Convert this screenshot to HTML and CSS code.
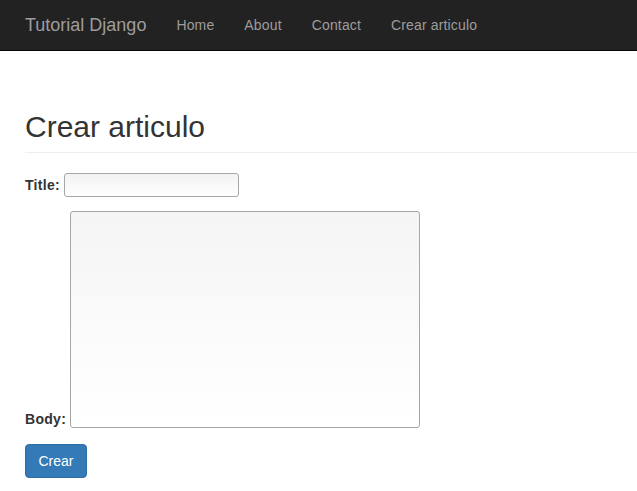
FILE: index.html
```html
<!DOCTYPE html>
<html>
<head>
<meta charset="utf-8">
<title>Crear articulo</title>
<link rel="stylesheet" href="styles.css">
</head>
<body>
<nav class="navbar">
  <a class="brand" href="#">Tutorial Django</a>
  <ul class="nav">
    <li><a href="#">Home</a></li>
    <li><a href="#">About</a></li>
    <li><a href="#">Contact</a></li>
    <li><a href="#">Crear articulo</a></li>
  </ul>
</nav>
<main class="container">
  <div class="page-header">
    <h1>Crear articulo</h1>
  </div>
  <form class="form">
    <p class="row row-title"><label for="title">Title:</label><input id="title" type="text" class="input"></p>
    <p class="row row-body"><label for="body">Body:</label><textarea id="body" class="textarea"></textarea></p>
    <button type="button" class="btn">Crear</button>
  </form>
</main>
</body>
</html>
```
FILE: styles.css
```css
html, body {
  margin: 0;
  padding: 0;
}
body {
  font-family: "Liberation Sans", Arial, sans-serif;
  font-size: 14px;
  line-height: 1.42857;
  color: #333;
  background: #fff;
}
.navbar {
  display: flex;
  align-items: center;
  height: 50px;
  background: #222;
  border-bottom: 1px solid #080808;
  padding-left: 10px;
}
.brand {
  padding: 15px;
  font-size: 18px;
  line-height: 20px;
  color: #9d9d9d;
  text-decoration: none;
}
.nav {
  display: flex;
  list-style: none;
  margin: 0;
  padding: 0;
}
.nav a {
  display: block;
  padding: 15px;
  line-height: 20px;
  color: #9d9d9d;
  text-decoration: none;
  letter-spacing: 0.15px;
}
.container {
  padding-left: 25px;
}
.page-header {
  margin: 59px 0 20px;
  padding-bottom: 9px;
  border-bottom: 1px solid #eee;
}
.page-header h1 {
  margin: 0;
  font-size: 30px;
  font-weight: 500;
  line-height: 1.1;
  color: #333;
}
.row {
  margin: 0 0 10px;
  display: flex;
  align-items: flex-end;
}
.row label {
  font-weight: bold;
  margin-right: 4px;
  letter-spacing: 0.3px;
}
.row-title label {
  margin-bottom: 1px;
}
.input {
  width: 175px;
  height: 24px;
  box-sizing: border-box;
  border: 1px solid #a6a6a6;
  border-radius: 3px;
  background: linear-gradient(#f2f2f2, #fff);
  padding: 0 4px;
  margin: 0;
}
.row-body {
  margin-top: 14px;
  margin-bottom: 16px;
}
.row-body label {
  margin-bottom: -2px;
}
.textarea {
  width: 350px;
  height: 217px;
  box-sizing: border-box;
  border: 1px solid #a6a6a6;
  border-radius: 3px;
  background: linear-gradient(#f5f5f5, #fff);
  margin: 0;
  resize: none;
}
.btn {
  display: block;
  width: 62px;
  height: 34px;
  padding: 0;
  font-family: inherit;
  font-size: 14px;
  color: #fff;
  background: #337ab7;
  border: 1px solid #2e6da4;
  border-radius: 4px;
}
```
